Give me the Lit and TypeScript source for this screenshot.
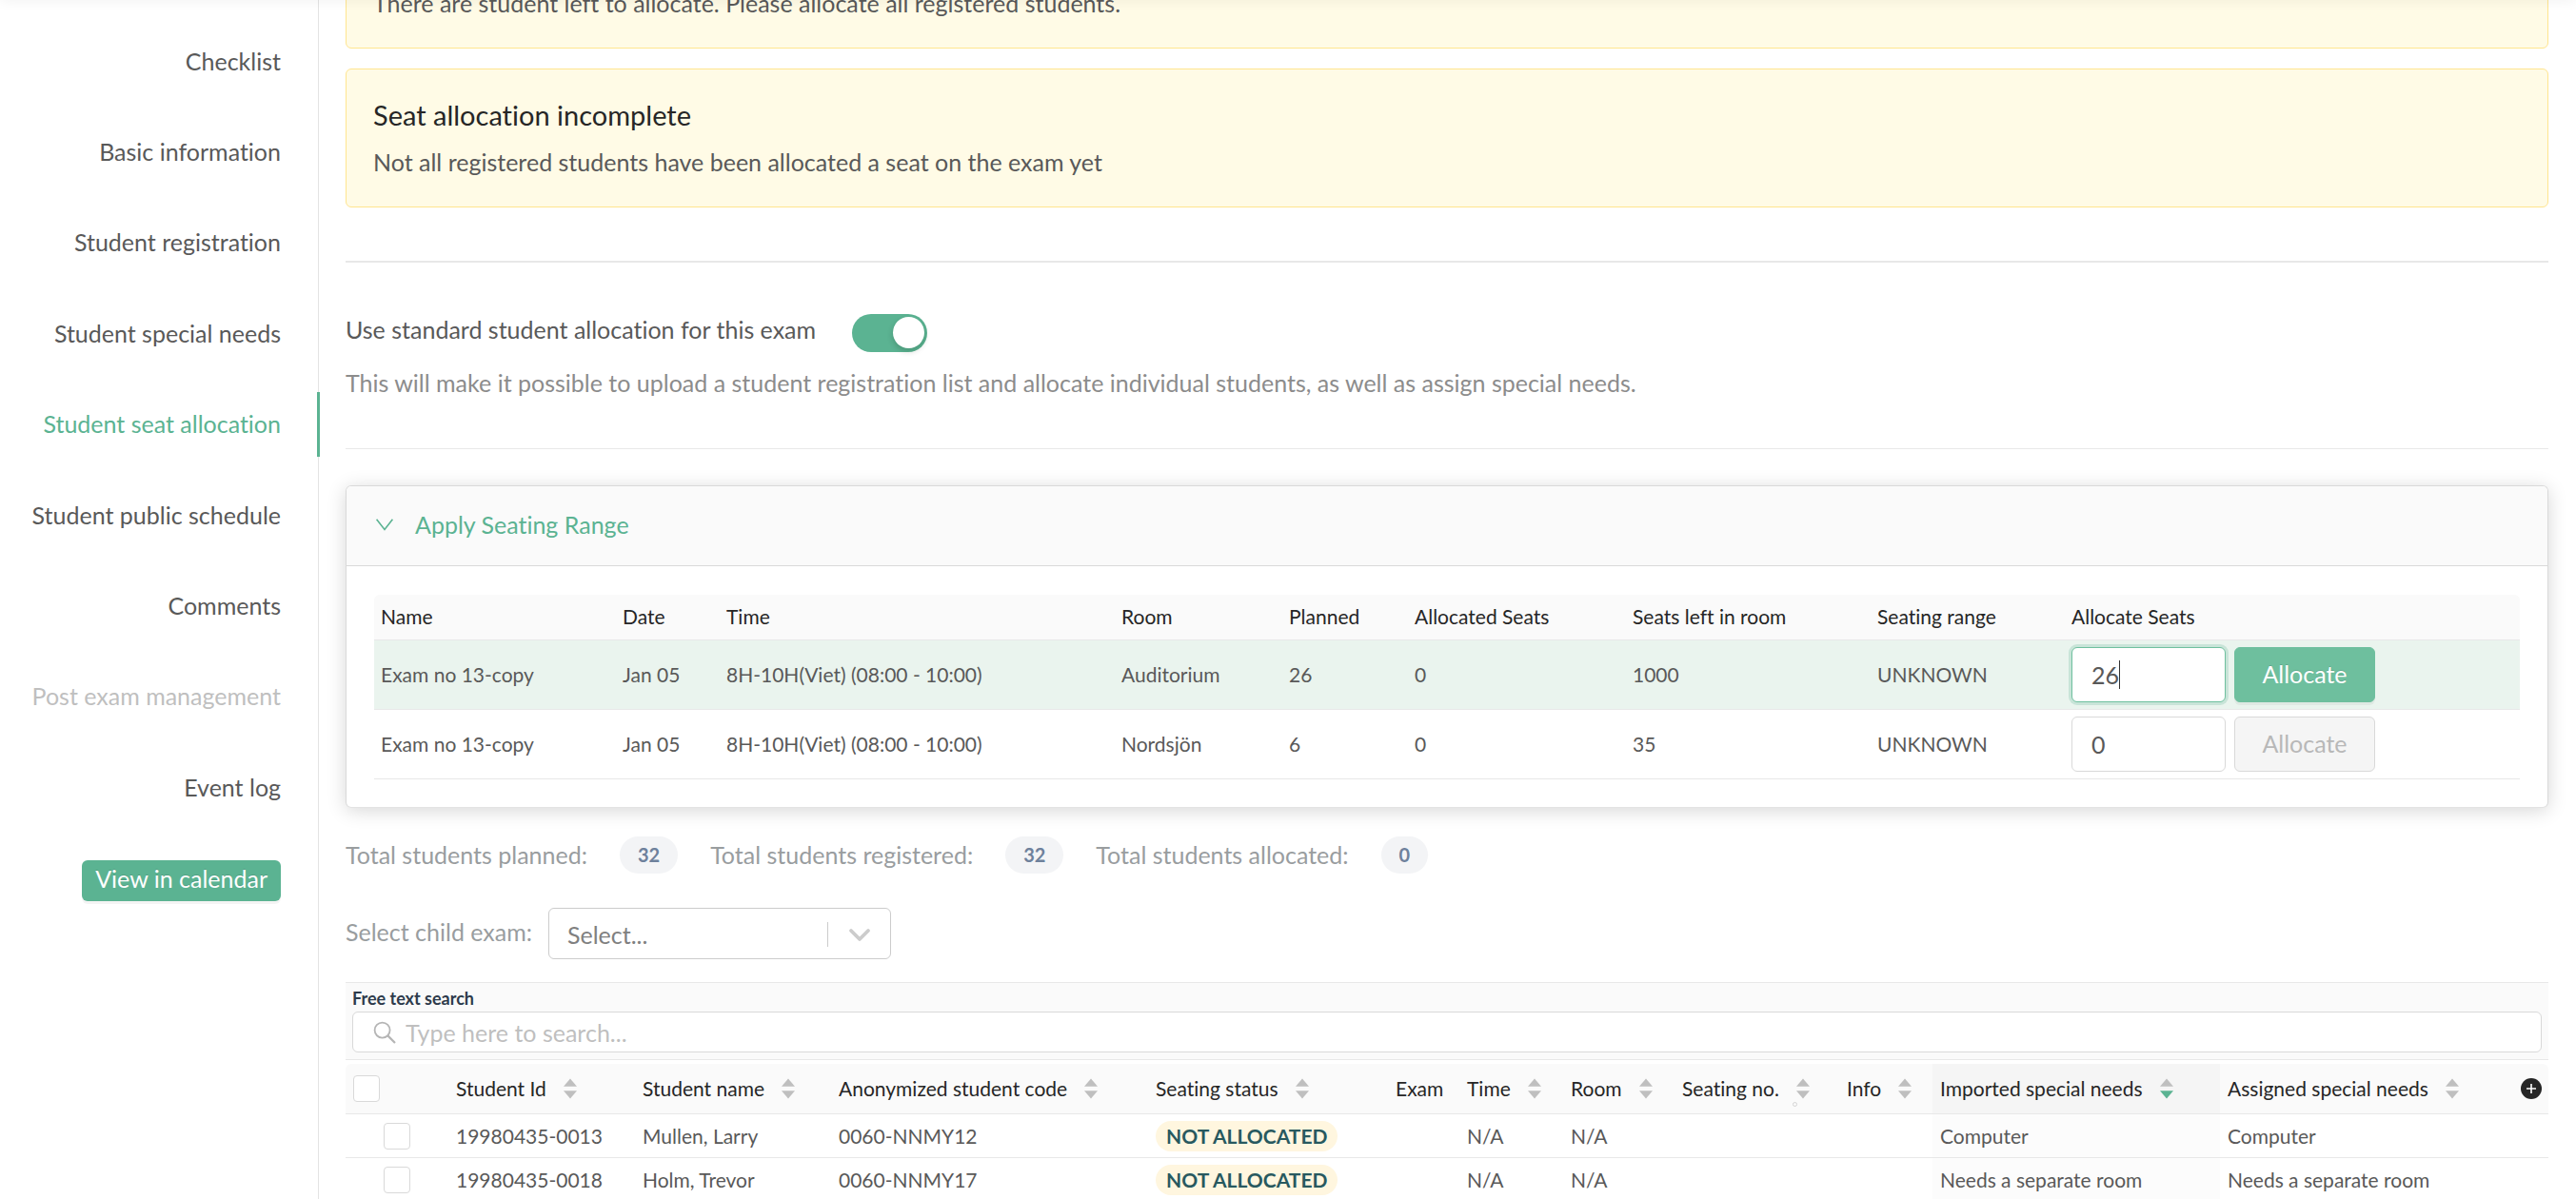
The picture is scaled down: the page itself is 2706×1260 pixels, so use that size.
import { LitElement, html, css, svg, nothing } from "lit";
import { customElement, state } from "lit/decorators.js";
import { classMap } from "lit/directives/class-map.js";

interface NavItem {
  label: string;
  active?: boolean;
  disabled?: boolean;
}

interface Column {
  label: string;
  width: number;
  sort?: "none" | "desc";
}

interface Session {
  name: string;
  date: string;
  time: string;
  room: string;
  planned: number;
  allocated: number;
  left: number;
  range: string;
  seats: number;
}

interface Student {
  id: string;
  name: string;
  code: string;
  status: string;
  time: string;
  room: string;
  imported: string;
  assigned: string;
}

const NAV: NavItem[] = [
  { label: "Checklist" },
  { label: "Basic information" },
  { label: "Student registration" },
  { label: "Student special needs" },
  { label: "Student seat allocation", active: true },
  { label: "Student public schedule" },
  { label: "Comments" },
  { label: "Post exam management", disabled: true },
  { label: "Event log" },
];

const SESSION_COLUMNS: Column[] = [
  { label: "Name", width: 254 },
  { label: "Date", width: 109 },
  { label: "Time", width: 415 },
  { label: "Room", width: 176 },
  { label: "Planned", width: 132 },
  { label: "Allocated Seats", width: 229 },
  { label: "Seats left in room", width: 257 },
  { label: "Seating range", width: 204 },
  { label: "Allocate Seats", width: 478 },
];

const SESSIONS: Session[] = [
  { name: "Exam no 13-copy", date: "Jan 05", time: "8H-10H(Viet) (08:00 - 10:00)", room: "Auditorium", planned: 26, allocated: 0, left: 1000, range: "UNKNOWN", seats: 26 },
  { name: "Exam no 13-copy", date: "Jan 05", time: "8H-10H(Viet) (08:00 - 10:00)", room: "Nordsjön", planned: 6, allocated: 0, left: 35, range: "UNKNOWN", seats: 0 },
];

const TOTALS = [
  { label: "Total students planned:", value: 32 },
  { label: "Total students registered:", value: 32 },
  { label: "Total students allocated:", value: 0 },
];

const STUDENT_COLUMNS: Column[] = [
  { label: "Student Id", width: 196, sort: "none" },
  { label: "Student name", width: 206, sort: "none" },
  { label: "Anonymized student code", width: 333, sort: "none" },
  { label: "Seating status", width: 252, sort: "none" },
  { label: "Exam", width: 75 },
  { label: "Time", width: 109, sort: "none" },
  { label: "Room", width: 117, sort: "none" },
  { label: "Seating no.", width: 173, sort: "none" },
  { label: "Info", width: 98, sort: "none" },
  { label: "Imported special needs", width: 302, sort: "desc" },
  { label: "Assigned special needs", width: 308, sort: "none" },
];

const STUDENTS: Student[] = [
  { id: "19980435-0013", name: "Mullen, Larry", code: "0060-NNMY12", status: "NOT ALLOCATED", time: "N/A", room: "N/A", imported: "Computer", assigned: "Computer" },
  { id: "19980435-0018", name: "Holm, Trevor", code: "0060-NNMY17", status: "NOT ALLOCATED", time: "N/A", room: "N/A", imported: "Needs a separate room", assigned: "Needs a separate room" },
];

const shared = css`
  :host {
    display: block;
  }
  * {
    box-sizing: border-box;
  }
  button,
  input,
  select {
    margin: 0;
    font: inherit;
    color: inherit;
    font-variant-ligatures: inherit;
  }
  button {
    cursor: pointer;
  }
  table {
    width: 100%;
    table-layout: fixed;
    border-collapse: separate;
    border-spacing: 0;
    font-size: 21px;
    line-height: 30px;
    color: #595959;
  }
  th {
    font-weight: 400;
    text-align: left;
    color: #262626;
    background: #fafafa;
    white-space: nowrap;
  }
  th:first-child {
    border-top-left-radius: 6px;
  }
  th:last-child {
    border-top-right-radius: 6px;
  }
  th,
  td {
    padding: 0 8px;
    border-bottom: 1px solid #e8e8e8;
  }
`;

@customElement("side-nav")
class SideNav extends LitElement {
  static styles = [
    shared,
    css`
      :host {
        flex: none;
        width: 335px;
        border-right: 1px solid #e3e3e3;
      }
      .list {
        display: grid;
        grid-auto-rows: 1fr;
        min-height: 954px;
        padding: 0;
        margin: 17px 0 0;
        list-style: none;
      }
      .row {
        display: flex;
        align-items: center;
        justify-content: flex-end;
      }
      .link {
        position: relative;
        flex: 1;
        padding: 14px 39px 15px 0;
        line-height: 39px;
        text-align: right;
        color: #595959;
        text-decoration: none;
      }
      .active {
        color: #5bb392;
      }
      .active::after {
        content: "";
        position: absolute;
        top: 0;
        bottom: 0;
        right: -2px;
        width: 3px;
        background: #5bb392;
      }
      .disabled {
        color: #bfbfbf;
      }
      .calendar {
        height: 43px;
        margin: 4px 39px 0 0;
        padding: 0 14px 4px;
        border: 0;
        border-radius: 6px;
        background: #5bb392;
        color: #fff;
        line-height: 39px;
        text-shadow: 0 -1px 0 rgba(0, 0, 0, 0.12);
        box-shadow: 0 3px 0 rgba(0, 0, 0, 0.045);
      }
    `,
  ];

  render() {
    return html`
      <nav>
        <ul class="list">
          ${NAV.map(
            (item) => html`<li class="row">
              <a
                class=${classMap({ link: true, active: !!item.active, disabled: !!item.disabled })}
                href="#"
                aria-current=${item.active ? "page" : nothing}
                aria-disabled=${item.disabled ? "true" : nothing}
                >${item.label}</a
              >
            </li>`
          )}
          <li class="row"><button class="calendar" type="button">View in calendar</button></li>
        </ul>
      </nav>
    `;
  }
}

@customElement("seating-range")
class SeatingRange extends LitElement {
  static styles = [
    shared,
    css`
      .card {
        border: 1px solid #d9d9d9;
        border-bottom-color: #e3e3e3;
        border-radius: 6px;
        background: #fff;
        box-shadow: 0 3px 20px rgba(0, 0, 0, 0.16);
      }
      .head {
        display: flex;
        align-items: center;
        gap: 22px;
        width: 100%;
        padding: 21px 30px 23px;
        border: 0;
        border-bottom: 1px solid #d9d9d9;
        border-radius: 5px 5px 0 0;
        background: #fafafa;
        color: #5bb392;
        line-height: 39px;
        text-align: left;
      }
      .chevron {
        width: 20px;
        height: 20px;
      }
      .body {
        padding: 30px 29px 29px;
      }
      th,
      td {
        padding: 0 7px;
      }
      th {
        height: 48px;
        padding-bottom: 2px;
      }
      td {
        height: 73px;
      }
      .selected td {
        background: #eaf4ee;
      }
      .seats {
        display: flex;
        gap: 9px;
      }
      .field {
        position: relative;
      }
      .input {
        display: block;
        width: 162px;
        height: 58px;
        padding: 0 20px;
        border: 1px solid #d9d9d9;
        border-radius: 6px;
        outline: 0;
        background: #fff;
        font-size: 25px;
      }
      .selected .input {
        border-color: #6fc09f;
        box-shadow: 0 0 0 3px rgba(91, 179, 146, 0.24);
      }
      .caret {
        position: absolute;
        top: 14px;
        left: 50px;
        width: 1px;
        height: 30px;
        background: #333;
      }
      .allocate {
        width: 148px;
        height: 58px;
        padding: 0 0 2px;
        border: 1px solid #6ebf9e;
        border-radius: 6px;
        background: #6ebf9e;
        color: #fff;
        font-size: 25px;
        text-shadow: 0 -1px 0 rgba(0, 0, 0, 0.12);
        box-shadow: 0 3px 0 rgba(0, 0, 0, 0.045);
      }
      .allocate:disabled {
        border-color: #d9d9d9;
        background: #f5f5f5;
        color: #b8b8b8;
        text-shadow: none;
        box-shadow: none;
        cursor: not-allowed;
      }
    `,
  ];

  @state() selected = 0;

  render() {
    return html`
      <section class="card">
        <button class="head" type="button" aria-expanded="true">
          <svg class="chevron" viewBox="0 0 20 20" fill="none" stroke="currentColor" stroke-width="1.6">
            <path d="M1.6 3.8 L10 14.4 L18.4 3.8" />
          </svg>
          <span>Apply Seating Range</span>
        </button>
        <div class="body">
          <table>
            <colgroup>
              ${SESSION_COLUMNS.map((c) => html`<col style="width:${c.width}px" />`)}
            </colgroup>
            <thead>
              <tr>
                ${SESSION_COLUMNS.map((c) => html`<th scope="col">${c.label}</th>`)}
              </tr>
            </thead>
            <tbody>
              ${SESSIONS.map((s, i) => {
                const on = i === this.selected;
                return html`<tr class=${classMap({ selected: on })}>
                  <td>${s.name}</td>
                  <td>${s.date}</td>
                  <td>${s.time}</td>
                  <td>${s.room}</td>
                  <td>${s.planned}</td>
                  <td>${s.allocated}</td>
                  <td>${s.left}</td>
                  <td>${s.range}</td>
                  <td>
                    <div class="seats">
                      <div class="field">
                        <input class="input" type="text" inputmode="numeric" aria-label="Allocate Seats" .value=${String(s.seats)} />
                        ${on ? html`<span class="caret"></span>` : nothing}
                      </div>
                      <button class="allocate" type="button" ?disabled=${s.seats === 0}>Allocate</button>
                    </div>
                  </td>
                </tr>`;
              })}
            </tbody>
          </table>
        </div>
      </section>
    `;
  }
}

@customElement("student-table")
class StudentTable extends LitElement {
  static styles = [
    shared,
    css`
      .search {
        padding: 2px 7px 7px;
        margin-bottom: 4px;
        border-top: 1px solid #e8e8e8;
        border-bottom: 1px solid #e8e8e8;
        background: #fafafa;
      }
      .caption {
        display: block;
        font-size: 18px;
        font-weight: 700;
        line-height: 28px;
        color: #2d3a4b;
      }
      .box {
        display: flex;
        align-items: center;
        gap: 10px;
        height: 43px;
        padding: 0 21px;
        border: 1px solid #d9d9d9;
        border-radius: 6px;
        background: #fff;
      }
      .glass {
        flex: none;
        width: 24px;
        height: 24px;
        color: #b5b5b5;
      }
      .query {
        flex: 1;
        height: 41px;
        padding: 0;
        border: 0;
        outline: 0;
        background: none;
      }
      .query::placeholder {
        color: #bfbfbf;
        opacity: 1;
      }
      .pick {
        width: 108px;
      }
      .more {
        width: 37px;
      }
      th {
        position: relative;
        height: 53px;
      }
      td {
        height: 46px;
      }
      th.sorted {
        background: #f5f5f5;
      }
      td.sorted {
        background: #fcfcfc;
      }
      .check {
        display: block;
        appearance: none;
        width: 28px;
        height: 28px;
        border: 1px solid #d9d9d9;
        border-radius: 4px;
        background: #fff;
      }
      td .check {
        margin-left: 32px;
      }
      .sorter {
        display: flex;
        align-items: center;
        gap: 18px;
        padding: 0;
        border: 0;
        background: none;
      }
      .arrows {
        width: 14px;
        height: 22px;
      }
      .up,
      .down {
        fill: #bfbfbf;
      }
      .desc .down {
        fill: #5bb392;
      }
      .loading {
        position: absolute;
        left: 124px;
        top: 40px;
        width: 5px;
        height: 5px;
        border: 1px solid #d4d4d4;
        border-radius: 50%;
      }
      .tag {
        display: inline-block;
        padding: 0 11px;
        border-radius: 16px;
        background: #fff6df;
        color: #28595f;
        font-weight: 700;
        line-height: 32px;
        vertical-align: middle;
      }
      .add {
        display: block;
        padding: 0;
        border: 0;
        background: none;
        color: #262626;
      }
      .plus {
        display: block;
        width: 22px;
        height: 22px;
      }
    `,
  ];

  private heading(c: Column) {
    if (!c.sort) return html`<th scope="col">${c.label}</th>`;
    const desc = c.sort === "desc";
    return html`<th scope="col" class=${classMap({ sorted: desc })} aria-sort=${desc ? "descending" : "none"}>
      <button class=${classMap({ sorter: true, desc })} type="button">
        ${c.label}
        <svg class="arrows" viewBox="0 0 14 22">
          ${svg`<path class="up" d="M7 0.5 L14 8.7 H0 Z" /><path class="down" d="M0 13.3 H14 L7 21.5 Z" />`}
        </svg>
      </button>
      ${c.label === "Seating no." ? html`<span class="loading"></span>` : nothing}
    </th>`;
  }

  render() {
    return html`
      <div class="search">
        <label class="caption" for="query">Free text search</label>
        <div class="box">
          <svg class="glass" viewBox="0 0 24 24" fill="none" stroke="currentColor" stroke-width="1.8">
            <circle cx="9.6" cy="9.6" r="8" />
            <path d="M15.4 15.4 L23 23" stroke-width="2.2" />
          </svg>
          <input class="query" id="query" type="text" placeholder="Type here to search..." />
        </div>
      </div>
      <table>
        <colgroup>
          <col class="pick" />
          ${STUDENT_COLUMNS.map((c) => html`<col style="width:${c.width}px" />`)}
          <col class="more" />
        </colgroup>
        <thead>
          <tr>
            <th scope="col"><input class="check" type="checkbox" aria-label="Select all students" /></th>
            ${STUDENT_COLUMNS.map((c) => this.heading(c))}
            <th scope="col">
              <button class="add" type="button" aria-label="Add column">
                <svg class="plus" viewBox="0 0 22 22">
                  <circle cx="11" cy="11" r="11" fill="currentColor" />
                  <path d="M11 6 V16 M6 11 H16" stroke="#fff" stroke-width="1.6" />
                </svg>
              </button>
            </th>
          </tr>
        </thead>
        <tbody>
          ${STUDENTS.map(
            (s) => html`<tr>
              <td><input class="check" type="checkbox" aria-label=${s.name} /></td>
              <td>${s.id}</td>
              <td>${s.name}</td>
              <td>${s.code}</td>
              <td><span class="tag">${s.status}</span></td>
              <td></td>
              <td>${s.time}</td>
              <td>${s.room}</td>
              <td></td>
              <td></td>
              <td class="sorted">${s.imported}</td>
              <td>${s.assigned}</td>
              <td></td>
            </tr>`
          )}
        </tbody>
      </table>
    `;
  }
}

@customElement("app-root")
class AppRoot extends LitElement {
  static styles = [
    shared,
    css`
      :host {
        position: relative;
        height: 100vh;
        overflow: auto;
        scrollbar-width: none;
        background: #fff;
        color: #595959;
        font-family: Lato, "Noto Sans", sans-serif;
        font-size: 25px;
        line-height: 39px;
        font-variant-ligatures: no-common-ligatures;
      }
      :host::before {
        content: "";
        position: absolute;
        z-index: 1;
        top: -10px;
        left: 0;
        right: 0;
        height: 10px;
        box-shadow: 0 0 14px rgba(0, 0, 0, 0.07);
      }
      .page {
        display: flex;
        min-height: 100%;
      }
      .main {
        flex: 1;
        min-width: 0;
        margin-top: -45px;
        padding: 0 29px 0 28px;
      }
      .alert {
        margin-bottom: 21px;
        padding: 28px 28px 27px;
        border: 1px solid #ffe58f;
        border-radius: 6px;
        background: #fffbe6;
      }
      .title {
        margin: 0 0 10px;
        font-size: 29px;
        font-weight: 400;
        line-height: 40px;
        color: #262626;
      }
      .text {
        margin: 0;
      }
      .rule {
        height: 1px;
        margin: 0;
        border: 0;
        background: #e8e8e8;
      }
      .strong {
        height: 2px;
        margin: 56px 0 51px;
      }
      .standard {
        display: flex;
        align-items: flex-start;
        gap: 38px;
      }
      .switch {
        display: flex;
        appearance: none;
        width: 79px;
        height: 40px;
        margin-top: 3px;
        padding: 3px;
        border-radius: 20px;
        background: #5bb392;
        justify-content: flex-end;
      }
      .switch::before {
        content: "";
        width: 33px;
        height: 33px;
        border-radius: 50%;
        background: #fff;
        box-shadow: 0 3px 6px rgba(0, 35, 11, 0.2);
      }
      .hint {
        margin: 13px 0 49px;
        color: #8c8c8c;
      }
      .range {
        margin-top: 38px;
      }
      .totals {
        display: flex;
        gap: 34px;
        margin: 30px 0 36px;
        color: #999d9f;
      }
      .total {
        display: flex;
        gap: 34px;
        margin: 0;
      }
      .pill {
        padding: 0 19px;
        border-radius: 20px;
        background: #f3f4f6;
        color: #6e819c;
        font-size: 20px;
        font-weight: 700;
      }
      .child {
        display: flex;
        align-items: center;
        gap: 17px;
        margin-bottom: 24px;
        color: #999d9f;
      }
      .label {
        padding-bottom: 3px;
      }
      .picker {
        position: relative;
        width: 360px;
      }
      .select {
        display: block;
        appearance: none;
        width: 100%;
        height: 54px;
        padding: 2px 70px 0 19px;
        border: 1px solid #ccc;
        border-radius: 6px;
        background: #fff;
        color: #808080;
      }
      .arrow {
        position: absolute;
        top: 15px;
        right: 12px;
        width: 56px;
        height: 26px;
        color: #ccc;
        pointer-events: none;
      }
    `,
  ];

  render() {
    return html`
      <div class="page">
        <side-nav></side-nav>
        <main class="main">
          <div class="alert" role="alert">
            <p class="text">There are student left to allocate. Please allocate all registered students.</p>
          </div>
          <div class="alert" role="alert">
            <h2 class="title">Seat allocation incomplete</h2>
            <p class="text">Not all registered students have been allocated a seat on the exam yet</p>
          </div>
          <hr class="rule strong" />
          <div class="standard">
            <label for="standard">Use standard student allocation for this exam</label>
            <input class="switch" id="standard" type="checkbox" role="switch" checked />
          </div>
          <p class="hint">
            This will make it possible to upload a student registration list and allocate individual students, as well as assign special needs.
          </p>
          <hr class="rule" />
          <seating-range class="range"></seating-range>
          <div class="totals">
            ${TOTALS.map((t) => html`<p class="total">${t.label} <span class="pill">${t.value}</span></p>`)}
          </div>
          <div class="child">
            <label class="label" for="child">Select child exam:</label>
            <div class="picker">
              <select class="select" id="child">
                <option>Select...</option>
              </select>
              <svg class="arrow" viewBox="0 0 56 26" fill="none" stroke="currentColor">
                <path d="M1.5 0 V26" />
                <path d="M26 9 L35 18 L44 9" stroke-width="3.8" stroke-linecap="round" stroke-linejoin="round" />
              </svg>
            </div>
          </div>
          <student-table></student-table>
        </main>
      </div>
    `;
  }
}
